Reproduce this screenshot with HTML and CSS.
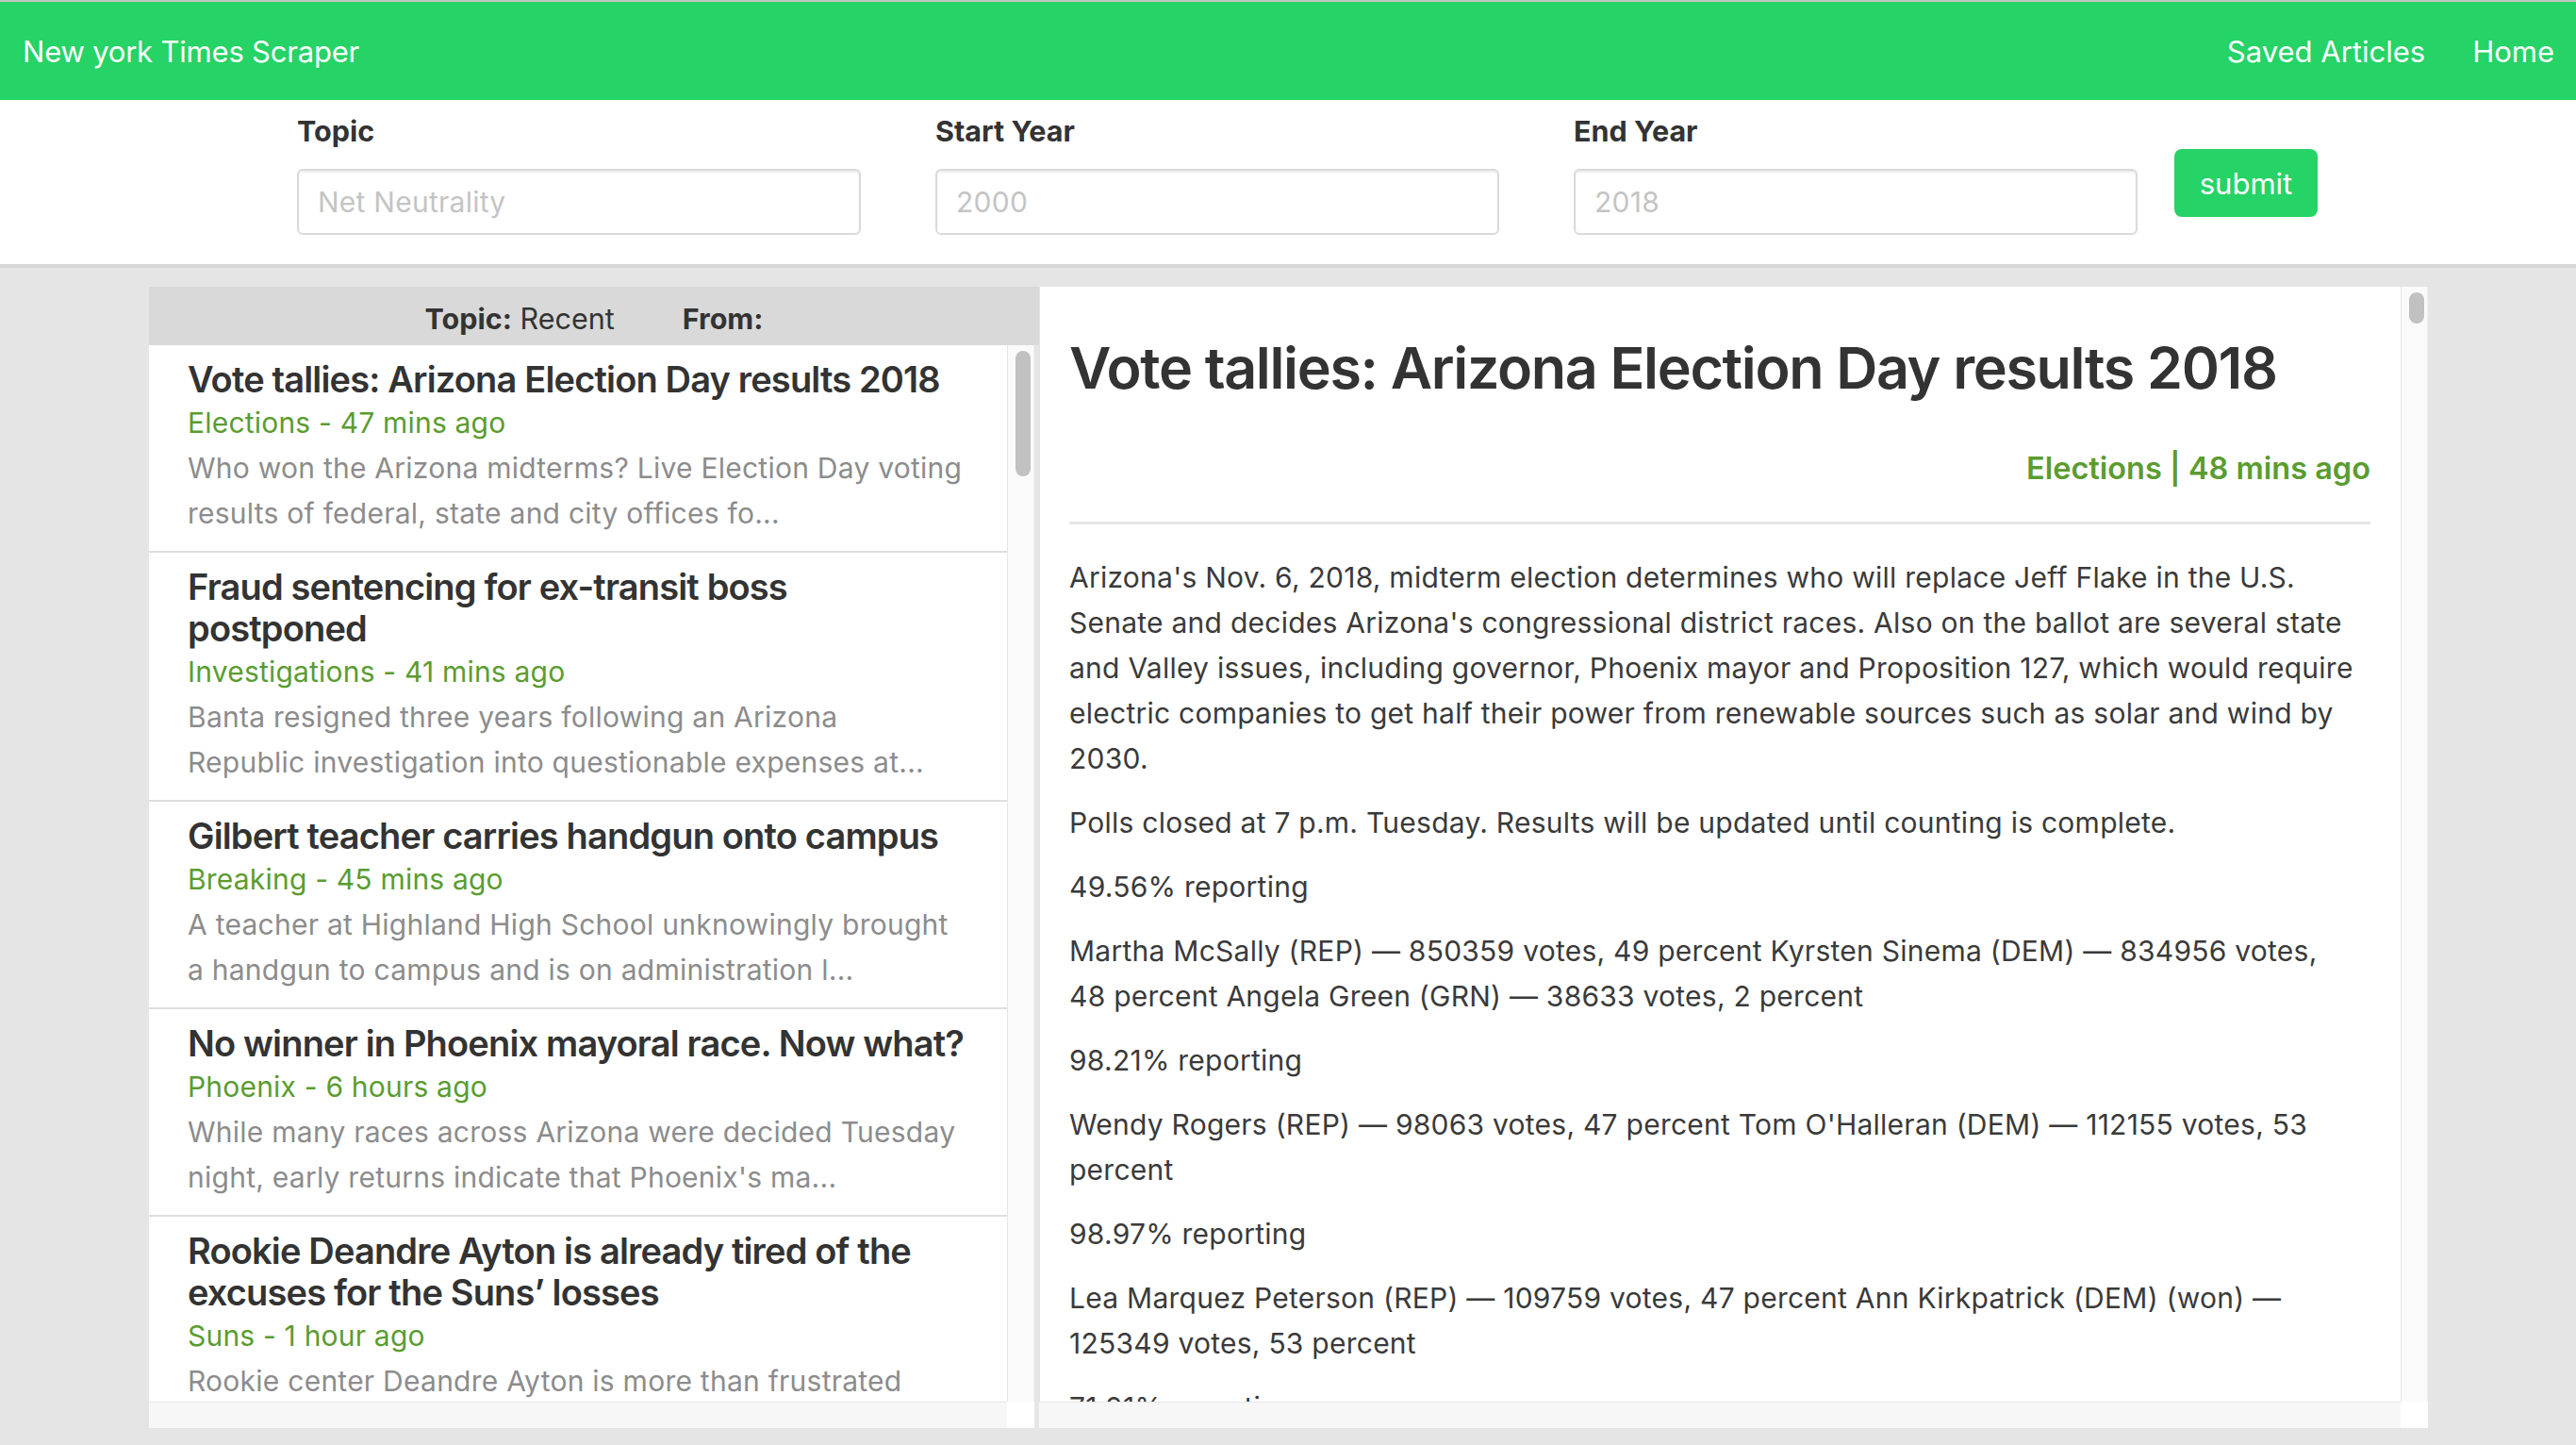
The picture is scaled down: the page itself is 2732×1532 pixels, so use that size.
FILE: index.html
```html
<!DOCTYPE html>
<html lang="en">
<head>
<meta charset="utf-8">
<title>New york Times Scraper</title>
<link rel="stylesheet" href="styles.css">
</head>
<body>
<header class="navbar">
  <span class="brand">New york Times Scraper</span>
  <nav class="nav-links">
    <a href="#" class="nav-link">Saved Articles</a>
    <a href="#" class="nav-link">Home</a>
  </nav>
</header>

<form class="search">
  <div class="field">
    <label class="field-label">Topic</label>
    <input class="field-input" type="text" placeholder="Net Neutrality">
  </div>
  <div class="field">
    <label class="field-label">Start Year</label>
    <input class="field-input" type="text" placeholder="2000">
  </div>
  <div class="field">
    <label class="field-label">End Year</label>
    <input class="field-input" type="text" placeholder="2018">
  </div>
  <button class="submit" type="button">submit</button>
</form>

<main class="main">
  <section class="list-panel">
    <div class="list-header">
      <span><b>Topic:</b> Recent</span>
      <span><b>From:</b></span>
    </div>
    <div class="panel-row list-row">
      <div class="list-scroll">
        <div class="item">
          <h3 class="item-title">Vote tallies: Arizona Election Day results 2018</h3>
          <div class="item-meta">Elections - 47 mins ago</div>
          <p class="item-desc">Who won the Arizona midterms? Live Election Day voting<br>results of federal, state and city offices fo...</p>
        </div>
        <div class="item">
          <h3 class="item-title">Fraud sentencing for ex-transit boss<br>postponed</h3>
          <div class="item-meta">Investigations - 41 mins ago</div>
          <p class="item-desc">Banta resigned three years following an Arizona<br>Republic investigation into questionable expenses at...</p>
        </div>
        <div class="item">
          <h3 class="item-title">Gilbert teacher carries handgun onto campus</h3>
          <div class="item-meta">Breaking - 45 mins ago</div>
          <p class="item-desc">A teacher at Highland High School unknowingly brought<br>a handgun to campus and is on administration l...</p>
        </div>
        <div class="item">
          <h3 class="item-title">No winner in Phoenix mayoral race. Now what?</h3>
          <div class="item-meta">Phoenix - 6 hours ago</div>
          <p class="item-desc">While many races across Arizona were decided Tuesday<br>night, early returns indicate that Phoenix's ma...</p>
        </div>
        <div class="item">
          <h3 class="item-title">Rookie Deandre Ayton is already tired of the<br>excuses for the Suns’ losses</h3>
          <div class="item-meta">Suns - 1 hour ago</div>
          <p class="item-desc">Rookie center Deandre Ayton is more than frustrated</p>
        </div>
      </div>
      <div class="vtrack"><div class="thumb thumb-list"></div></div>
    </div>
    <div class="hbar list-hbar">
      <div class="htrack"></div>
      <div class="corner"></div>
    </div>
  </section>

  <section class="article-panel">
    <div class="panel-row article-row">
      <article class="article">
        <h1 class="article-title">Vote tallies: Arizona Election Day results 2018</h1>
        <div class="article-meta">Elections | 48 mins ago</div>
        <hr class="rule">
        <p class="first">Arizona's Nov. 6, 2018, midterm election determines who will replace Jeff Flake in the U.S.<br>Senate and decides Arizona's congressional district races. Also on the ballot are several state<br>and Valley issues, including governor, Phoenix mayor and Proposition 127, which would require<br>electric companies to get half their power from renewable sources such as solar and wind by<br>2030.</p>
        <p>Polls closed at 7 p.m. Tuesday. Results will be updated until counting is complete.</p>
        <p>49.56% reporting</p>
        <p>Martha McSally (REP) — 850359 votes, 49 percent Kyrsten Sinema (DEM) — 834956 votes,<br>48 percent Angela Green (GRN) — 38633 votes, 2 percent</p>
        <p>98.21% reporting</p>
        <p>Wendy Rogers (REP) — 98063 votes, 47 percent Tom O'Halleran (DEM) — 112155 votes, 53<br>percent</p>
        <p>98.97% reporting</p>
        <p>Lea Marquez Peterson (REP) — 109759 votes, 47 percent Ann Kirkpatrick (DEM) (won) —<br>125349 votes, 53 percent</p>
        <p>71.01% reporting</p>
      </article>
      <div class="vtrack"><div class="thumb thumb-article"></div></div>
    </div>
    <div class="hbar">
      <div class="htrack"></div>
      <div class="corner"></div>
    </div>
  </section>
</main>
</body>
</html>
```

FILE: styles.css
```css
html, body {
  margin: 0;
  padding: 0;
}

body {
  width: 2732px;
  height: 1532px;
  overflow: hidden;
  background: #e5e5e5;
  font-family: Inter, "Noto Sans", "Liberation Sans", sans-serif;
  color: #333;
}

/* navbar */
.navbar {
  display: flex;
  align-items: center;
  justify-content: space-between;
  box-sizing: border-box;
  height: 106px;
  border-top: 2px solid #c4c4c4;
  background: #25d366;
  padding: 0 23px 0 24px;
}

.brand {
  color: #fff;
  font-size: 31px;
  letter-spacing: -0.2px;
}

.nav-links {
  display: flex;
  gap: 50px;
}

.nav-link {
  color: #fff;
  font-size: 31px;
  text-decoration: none;
}

/* search form */
.search {
  display: flex;
  align-items: flex-start;
  box-sizing: border-box;
  height: 178px;
  margin: 0;
  padding: 15px 0 0 315px;
  background: #fff;
  border-bottom: 4px solid #d6d6d6;
}

.field {
  display: flex;
  flex-direction: column;
  width: 598px;
}

.field + .field {
  margin-left: 79px;
}

.field-label {
  font-size: 30.5px;
  font-weight: 700;
  line-height: 36px;
  margin-bottom: 22px;
  color: #333;
}

.field-input {
  box-sizing: border-box;
  height: 70px;
  border: 2px solid #dadada;
  border-radius: 6px;
  box-shadow: inset 0 2px 2px rgba(0, 0, 0, 0.07);
  padding: 0 20px;
  font-family: Inter, "Noto Sans", sans-serif;
  font-size: 30px;
  letter-spacing: 0.25px;
  color: #555;
  outline: none;
}

.field-input::placeholder {
  color: #c4c4c4;
}

.submit {
  margin: 37px 0 0 39px;
  width: 152px;
  height: 72px;
  border: none;
  border-radius: 8px;
  background: #25d366;
  color: #fff;
  font-family: Inter, "Noto Sans", sans-serif;
  font-size: 31px;
  padding: 0;
}

/* main */
.main {
  display: flex;
  height: 1210px;
  margin: 20px 0 0 158px;
}

.list-panel {
  display: flex;
  flex-direction: column;
  width: 944px;
}

.list-header {
  display: flex;
  justify-content: center;
  align-items: center;
  gap: 72px;
  box-sizing: border-box;
  height: 62px;
  padding-top: 5px;
  background: #d9d9d9;
  font-size: 30.5px;
  color: #333;
}

.list-header b {
  font-weight: 700;
}

.panel-row {
  display: flex;
}

.list-row {
  height: 1120px;
  margin-right: 5px;
}

.list-scroll {
  flex: 1;
  background: #fff;
  overflow: hidden;
}

.item {
  padding: 14px 20px 16px 41px;
  border-bottom: 2px solid #dedede;
}

.item-title {
  margin: 0;
  font-size: 38px;
  font-weight: 600;
  line-height: 44px;
  letter-spacing: -0.022em;
  color: #333;
}

.item-meta {
  font-size: 30px;
  line-height: 48px;
  letter-spacing: 0.2px;
  color: #5b9c30;
}

.item-desc {
  margin: 0;
  font-size: 30px;
  line-height: 48px;
  letter-spacing: 0.25px;
  color: #8c8c8c;
}

/* fake scrollbars */
.vtrack {
  box-sizing: border-box;
  width: 29px;
  padding: 6px 0 0 8px;
  background: #fafafa;
  border-left: 1px solid #e6e6e6;
  border-right: 1px solid #efefef;
}

.thumb {
  width: 16px;
  border-radius: 8px;
  background: #c1c1c1;
}

.thumb-list {
  height: 133px;
}

.thumb-article {
  height: 33px;
}

.hbar {
  display: flex;
  height: 28px;
}

.list-hbar {
  margin-right: 5px;
}

.htrack {
  flex: 1;
  background: #f7f7f7;
  border-top: 1px solid #e6e6e6;
}

.corner {
  width: 29px;
  background: #fff;
}

/* article */
.article-panel {
  display: flex;
  flex-direction: column;
  width: 1473px;
}

.article-row {
  height: 1182px;
}

.article {
  flex: 1;
  overflow: hidden;
  background: #fff;
  border-left: 1px solid #e2e2e2;
  padding: 0 32px 0 31px;
}

.article-title {
  margin: 50px 0 0;
  font-size: 61px;
  font-weight: 600;
  line-height: 72px;
  letter-spacing: -0.022em;
  color: #333;
}

.article-meta {
  margin-top: 48px;
  text-align: right;
  font-size: 32.5px;
  font-weight: 600;
  line-height: 46px;
  color: #5b9c30;
}

.rule {
  margin: 33px 0 0;
  border: 0;
  height: 3px;
  background: #e5e5e5;
}

.article p {
  margin: 0 0 20px;
  font-size: 30px;
  line-height: 48px;
  letter-spacing: 0.25px;
  color: #3a3a3a;
}

.article p.first {
  margin-top: 32px;
}
```
